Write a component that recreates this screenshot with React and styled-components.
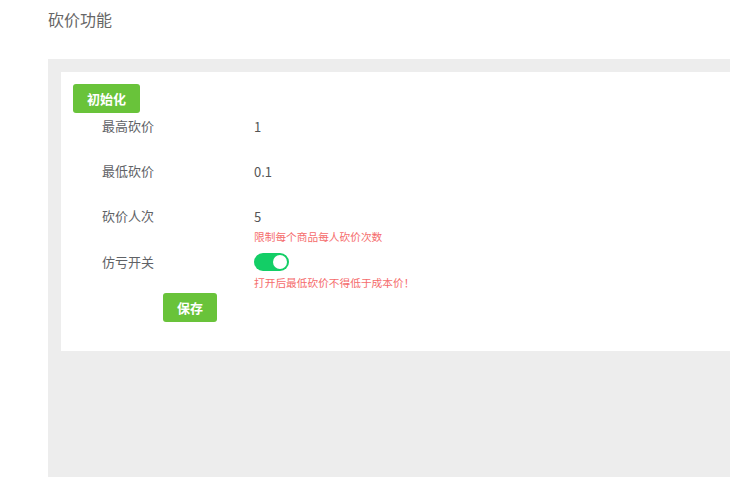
import React from "react";
import styled, { createGlobalStyle } from "styled-components";

const Global = createGlobalStyle`
  html, body { margin: 0; padding: 0; background: #fff; }
  body { font-family: "Noto Sans CJK SC", "Noto Sans", sans-serif; overflow: hidden; }
`;

const Page = styled.div`
  padding-left: 48px;
  height: 477px;
  display: flex;
  flex-direction: column;
`;

const Title = styled.h1`
  margin: 8px 0 0;
  height: 51px;
  font-size: 16px;
  line-height: 22px;
  font-weight: 400;
  color: #666;
`;

const Canvas = styled.div`
  flex: 1;
  background: #ededed;
  padding: 13px 0 0 13px;
`;

const Card = styled.div`
  background: #fff;
  height: 279px;
  box-sizing: border-box;
  padding: 12px 12px 0;
`;

const Button = styled.button`
  display: block;
  height: 29px;
  width: ${(p) => p.$w}px;
  margin-left: ${(p) => p.$ml || 0}px;
  padding: 0;
  border: none;
  border-radius: 3px;
  background: #69c33a;
  color: #fff;
  font-family: inherit;
  font-size: 13px;
  font-weight: 700;
  cursor: pointer;
`;

const Form = styled.div`
  display: flex;
  flex-direction: column;
`;

const Item = styled.div`
  display: flex;
  margin-bottom: ${(p) => p.$gap}px;
`;

const Label = styled.div`
  width: 152px;
  margin-left: 29px;
  font-size: 13px;
  line-height: 26px;
  color: #606266;
`;

const Field = styled.div`
  display: flex;
  flex-direction: column;
`;

const Value = styled.div`
  height: 26px;
  display: flex;
  align-items: center;
  font-size: 13px;
  color: #555;
`;

const Hint = styled.div`
  font-size: 10.7px;
  line-height: 16px;
  color: #f56c6c;
`;

const Switch = styled.span`
  position: relative;
  display: inline-block;
  width: 35px;
  height: 18px;
  border-radius: 9px;
  background: #13ce66;
  &::after {
    content: "";
    position: absolute;
    top: 2px;
    right: 2px;
    width: 14px;
    height: 14px;
    border-radius: 50%;
    background: #fff;
  }
`;

export default function App() {
  return (
    <>
      <Global />
      <Page>
        <Title>砍价功能</Title>
        <Canvas>
          <Card>
            <Button $w={67}>初始化</Button>
            <Form>
              <Item $gap={19}>
                <Label>最高砍价</Label>
                <Field><Value>1</Value></Field>
              </Item>
              <Item $gap={19}>
                <Label>最低砍价</Label>
                <Field><Value>0.1</Value></Field>
              </Item>
              <Item $gap={4}>
                <Label>砍价人次</Label>
                <Field>
                  <Value>5</Value>
                  <Hint>限制每个商品每人砍价次数</Hint>
                </Field>
              </Item>
              <Item $gap={2}>
                <Label>仿亏开关</Label>
                <Field>
                  <Value><Switch /></Value>
                  <Hint>打开后最低砍价不得低于成本价！</Hint>
                </Field>
              </Item>
              <Button $w={54} $ml={90}>保存</Button>
            </Form>
          </Card>
        </Canvas>
      </Page>
    </>
  );
}
